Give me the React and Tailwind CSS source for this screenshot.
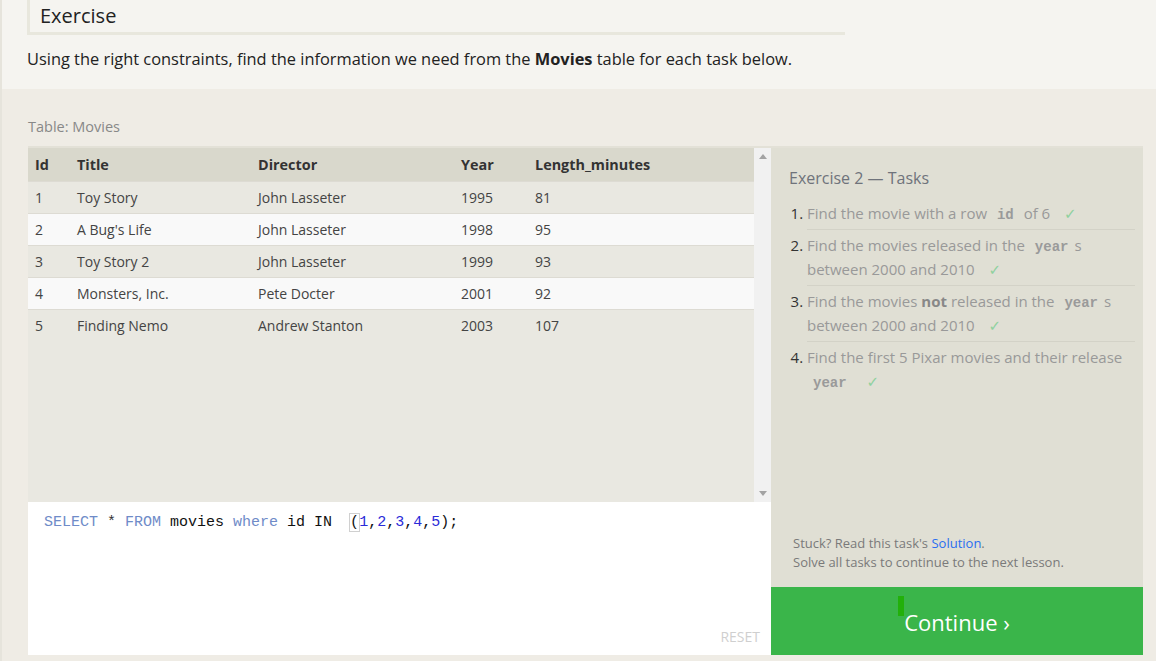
import React from 'react';

const movies = [
    { id: 1, title: 'Toy Story', director: 'John Lasseter', year: 1995, length: 81 },
    { id: 2, title: "A Bug's Life", director: 'John Lasseter', year: 1998, length: 95 },
    { id: 3, title: 'Toy Story 2', director: 'John Lasseter', year: 1999, length: 93 },
    { id: 4, title: 'Monsters, Inc.', director: 'Pete Docter', year: 2001, length: 92 },
    { id: 5, title: 'Finding Nemo', director: 'Andrew Stanton', year: 2003, length: 107 },
];

const Code = ({ children }) => (
    <code className="font-['Liberation_Mono',monospace] font-bold text-[14px] leading-none text-[#9a9a9a] px-[6px]">{children}</code>
);

const Check = () => <span className="font-['DejaVu_Sans',sans-serif] text-[15px] leading-none text-[#8fd19e] ml-[10px]">✓</span>;

const App = () => {
    return (
        <div className="w-[1156px] h-[661px] overflow-hidden bg-[#efece5] border-l-2 border-[#e6e4dc] font-['Open_Sans','Noto_Sans',sans-serif] text-[#333]">
            {/* intro */}
            <div className="h-[89px] bg-[#f5f4f0] pl-[25px]">
                <div className="w-[818px] h-[35px] border-l-[3px] border-b-[3px] border-[#e8e7dd] pl-[10px] flex items-end pb-[4px]">
                    <span className="text-[20px] leading-[24px] text-[#222]">Exercise</span>
                </div>
                <p className="mt-[12px] text-[16.4px] leading-[24px] text-[#222]">
                    Using the right constraints, find the information we need from the <b>Movies</b> table for each task below.
                </p>
            </div>

            <div className="pl-[26px] pt-[27px]">
                <div className="text-[14.5px] leading-[22px] text-[#888] mb-[8px]">Table: Movies</div>

                <div className="flex w-[1115px] h-[509px] border-t-2 border-[#e3e1d7]">
                    {/* left: table + editor */}
                    <div className="w-[743px] flex flex-col">
                        <div className="h-[354px] flex bg-[#e9e8e1]">
                            <div className="flex-1 text-[14px]">
                                <div className="h-[33px] flex items-center bg-[#d9d8cc] font-bold text-[14.4px] text-[#333]">
                                    <div className="w-[42px] pl-[7px]">Id</div>
                                    <div className="w-[181px] pl-[7px]">Title</div>
                                    <div className="w-[203px] pl-[7px]">Director</div>
                                    <div className="w-[74px] pl-[7px]">Year</div>
                                    <div className="flex-1 pl-[7px]">Length_minutes</div>
                                </div>
                                {movies.map((m, i) => (
                                    <div
                                        key={m.id}
                                        className={`h-[32px] flex items-center border-t border-[#dddbd3] text-[#444] ${i % 2 === 1 ? 'bg-[#f9f9f9]' : 'bg-[#e9e8e1]'}`}
                                    >
                                        <div className="w-[42px] pl-[7px]">{m.id}</div>
                                        <div className="w-[181px] pl-[7px]">{m.title}</div>
                                        <div className="w-[203px] pl-[7px]">{m.director}</div>
                                        <div className="w-[74px] pl-[7px]">{m.year}</div>
                                        <div className="flex-1 pl-[7px]">{m.length}</div>
                                    </div>
                                ))}
                            </div>
                            <div className="w-[17px] bg-[#f1f1f1] flex flex-col items-center justify-between py-[6px]">
                                <svg width="8" height="5" viewBox="0 0 8 5"><path d="M0 5 L4 0 L8 5 Z" fill="#a3a3a3" /></svg>
                                <svg width="8" height="5" viewBox="0 0 8 5"><path d="M0 0 L4 5 L8 0 Z" fill="#a3a3a3" /></svg>
                            </div>
                        </div>
                        <div className="flex-1 bg-white flex flex-col justify-between pl-[16px] pr-[11px] pt-[11px] pb-[8px]">
                            <pre className="font-['Liberation_Mono',monospace] text-[15px] leading-[20px] text-[#111]">
                                <span className="text-[#6f8bc8]">SELECT</span>
                                <span className="text-[#333]"> * </span>
                                <span className="text-[#6f8bc8]">FROM</span> movies <span className="text-[#6f8bc8]">where</span> id IN{' '}
                                <span className="ml-[9px] outline outline-1 outline-[#d0d0d0]">(</span>
                                <span className="text-[#2a2ad8]">1</span>,<span className="text-[#2a2ad8]">2</span>,<span className="text-[#2a2ad8]">3</span>,<span className="text-[#2a2ad8]">4</span>,<span className="text-[#2a2ad8]">5</span>);
                            </pre>
                            <div className="self-end text-[14px] leading-[20px] text-[#cfcfcf]">RESET</div>
                        </div>
                    </div>

                    {/* right: tasks */}
                    <div className="w-[372px] flex flex-col">
                        <div className="flex-1 bg-[#e0dfd4] pl-[18px] pr-[8px] pt-[18px] pb-[15px] flex flex-col">
                            <h2 className="text-[16px] leading-[24px] text-[#6f737b]">Exercise 2 — Tasks</h2>
                            <ol className="list-decimal pl-[18px] mt-[8px] text-[15px] leading-[24px] text-[#999] marker:text-[#333]">
                                <li className="pt-[3px] pb-[4px] border-b border-[#d3d2c7]">
                                    Find the movie with a row <Code>id</Code> of 6 <Check />
                                </li>
                                <li className="pt-[3px] pb-[4px] border-b border-[#d3d2c7]">
                                    Find the movies released in the <Code>year</Code>s between 2000 and 2010 <Check />
                                </li>
                                <li className="pt-[3px] pb-[4px] border-b border-[#d3d2c7]">
                                    Find the movies <b className="text-[#888]">not</b> released in the <Code>year</Code>s between 2000 and 2010 <Check />
                                </li>
                                <li className="pt-[3px] pb-[4px]">
                                    Find the first 5 Pixar movies and their release <Code>year</Code> <Check />
                                </li>
                            </ol>
                            <div className="mt-auto pl-[4px] text-[13px] leading-[19px] text-[#7a7a7a]">
                                <p>Stuck? Read this task's <span className="text-[#2a6ef0]">Solution</span>.</p>
                                <p>Solve all tasks to continue to the next lesson.</p>
                            </div>
                        </div>
                        <div className="h-[68px] bg-[#3ab54a] flex items-center justify-center relative">
                            <div className="absolute left-[127px] top-[9px] w-[6px] h-[20px] bg-[#22b00a]"></div>
                            <span className="text-white text-[22px] leading-[28px] mt-[2px]">Continue ›</span>
                        </div>
                    </div>
                </div>
            </div>
        </div>
    );
};

export default App;
